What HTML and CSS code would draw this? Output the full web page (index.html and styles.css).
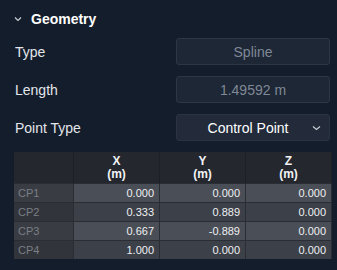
FILE: index.html
```html
<!DOCTYPE html>
<html>
<head>
<meta charset="utf-8">
<link rel="stylesheet" href="styles.css">
</head>
<body>
<div class="panel">
  <div class="section-head">
    <svg class="chev" width="8" height="6" viewBox="0 0 8 6"><path d="M1 1.5 L4 4.5 L7 1.5" fill="none" stroke="#c9ced6" stroke-width="1.2"/></svg>
    <span class="title">Geometry</span>
  </div>
  <div class="row">
    <span class="label">Type</span>
    <div class="field disabled">Spline</div>
  </div>
  <div class="row">
    <span class="label">Length</span>
    <div class="field disabled">1.49592 m</div>
  </div>
  <div class="row">
    <span class="label">Point Type</span>
    <div class="field select">
      <span class="select-text">Control Point</span>
      <svg class="select-chev" width="9" height="6" viewBox="0 0 9 6"><path d="M1 1.5 L4.5 4.5 L8 1.5" fill="none" stroke="#c9ced6" stroke-width="1.2"/></svg>
    </div>
  </div>
  <table class="grid">
    <thead>
      <tr><th class="corner"></th><th>X<br>(m)</th><th>Y<br>(m)</th><th>Z<br>(m)</th></tr>
    </thead>
    <tbody>
      <tr class="odd"><td class="name">CP1</td><td>0.000</td><td>0.000</td><td>0.000</td></tr>
      <tr class="even"><td class="name">CP2</td><td>0.333</td><td>0.889</td><td>0.000</td></tr>
      <tr class="odd"><td class="name">CP3</td><td>0.667</td><td>-0.889</td><td>0.000</td></tr>
      <tr class="even"><td class="name">CP4</td><td>1.000</td><td>0.000</td><td>0.000</td></tr>
    </tbody>
  </table>
</div>
</body>
</html>
```
FILE: styles.css
```css
html, body {
  margin: 0;
  padding: 0;
  background: #141d2b;
  font-family: "Liberation Sans", Arial, sans-serif;
  color: #e6e9ee;
}
.panel {
  width: 337px;
  height: 270px;
  box-sizing: border-box;
  padding: 0 7px 0 14px;
}
.section-head {
  height: 38px;
  display: flex;
  align-items: center;
}
.chev {
  margin-right: 9px;
}
.title {
  font-weight: bold;
  font-size: 14px;
  color: #ffffff;
}
.row {
  display: flex;
  align-items: center;
  justify-content: space-between;
  margin-bottom: 11px;
}
.label {
  font-size: 14px;
  padding-left: 1px;
  color: #e3e6eb;
}
.field {
  width: 154px;
  height: 27px;
  box-sizing: border-box;
  border: 1px solid #2c3646;
  border-radius: 3px;
  background: #1e2735;
  font-size: 14px;
  display: flex;
  align-items: center;
  justify-content: center;
}
.field.disabled {
  color: #7f8896;
}
.field.select {
  background: #232b3a;
  color: #ffffff;
  position: relative;
  border-color: #2a3342;
}
.select-text {
  margin-left: -10px;
}
.select-chev {
  position: absolute;
  right: 8px;
  top: 10px;
}
.grid {
  border-collapse: collapse;
  width: 315px;
  font-size: 11px;
  table-layout: fixed;
}
.grid th {
  background: #24272e;
  height: 31px;
  padding: 0;
  font-weight: bold;
  color: #f2f3f5;
  font-size: 12px;
  line-height: 13px;
  border-right: 1px solid #1e2026;
  width: 85px;
  vertical-align: middle;
}
.grid th.corner {
  width: 59px;
}
.grid td {
  height: 18px;
  padding: 0 5px 0 0;
  text-align: right;
  color: #eef0f3;
  border-right: 1px solid #2a2d33;
  border-top: 1px solid #2a2d33;
}
.grid td.name {
  text-align: left;
  padding-left: 4px;
  color: #7b7f86;
}
.grid tr.odd td {
  background: #4a4e56;
}
.grid tr.even td {
  background: #3c4048;
}
.grid tr.odd td.name {
  background: #393c43;
}
.grid tr.even td.name {
  background: #31343a;
}
```
